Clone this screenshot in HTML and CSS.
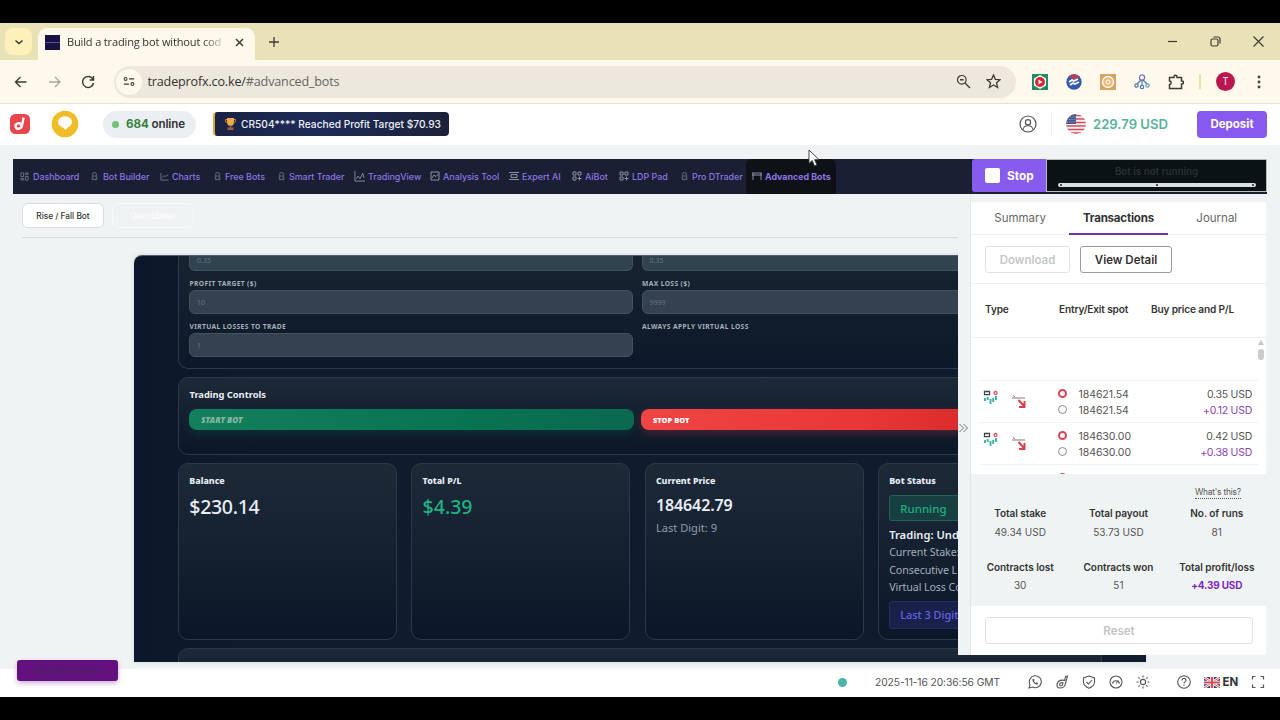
FILE: index.html
```html
<!DOCTYPE html>
<html lang="en">
<head>
<meta charset="utf-8">
<title>Build a trading bot without coding</title>
<link rel="stylesheet" href="styles.css">
</head>
<body>
<svg class="defs" width="0" height="0">
  <defs>
    <symbol id="grid" viewBox="0 0 10 10"><path d="M1 1h3v4H1zM6 1h3v2H6zM1 7h3v2H1zM6 5h3v4H6z"/></symbol>
    <symbol id="bot" viewBox="0 0 10 10"><path d="M2 4.500h6M3 4V2.500a2 2 0 0 1 4 0V4M2.500 5v3.500h5V5M4.200 6.500v.5M6 6.500v.5"/></symbol>
    <symbol id="chart" viewBox="0 0 10 10"><path d="M1 1v8h8.500M2.500 6l2-2 1.500 1 3-2"/></symbol>
    <symbol id="tv" viewBox="0 0 12 12"><path d="M1 0v11h11M2.500 8.500l2-3 2 3 3-6 1.500 5"/></symbol>
    <symbol id="analysis" viewBox="0 0 10 10"><path d="M1 1h8v8H1zM2 7l2-3 2 1.500L8.500 3"/></symbol>
    <symbol id="expert" viewBox="0 0 10 10"><path d="M0 1.500h10M2 3.500h6v3H2zM0 8.500h10"/></symbol>
    <symbol id="blocks" viewBox="0 0 10 10"><path d="M1 1h3v3H1zM6 1h3v3H6zM1 6h3v3H1zM7.500 5.500v4M5.500 7.500h4"/></symbol>
    <symbol id="adv" viewBox="0 0 10 10"><path d="M0 2h10M0 4h10M1 2v7M9 2v7"/></symbol>
    <symbol id="market" viewBox="0 0 16 16"><g fill="none" stroke-width="1.300"><path stroke="#444" d="M1.500 1.500h5v3.200h-5z"/><circle cx="12.500" cy="3" r="1.500" stroke="#e0525c"/></g><path d="M2 8v3M4.700 7v3M7.500 9v5M10.200 8v4M13 6v4" stroke="#38b0a4" stroke-width="1.900"/></symbol>
    <symbol id="fall" viewBox="0 0 16 16"><path d="M1 5h13" stroke="#999" stroke-width="1.300"/><path d="M2 2.500l2 1.500" stroke="#d84c55"/><path d="M7.500 7l5.500 6M13.500 8v6H8" fill="none" stroke="#d93e49" stroke-width="2"/></symbol>
    <symbol id="flaguk" viewBox="0 0 16 11"><path fill="#31436f" d="M0 0h16v11H0z"/><path d="M0 0l16 11M16 0L0 11" stroke="#fff" stroke-width="2.600"/><path d="M0 0l16 11M16 0L0 11" stroke="#d64853"/><path d="M8 0v11M0 5.500h16" stroke="#fff" stroke-width="3.600"/><path d="M8 0v11M0 5.500h16" stroke="#d64853" stroke-width="2"/></symbol>
  </defs>
</svg>
<div class="screen">
  <div class="tabstrip">
    <div class="tabmenu"><svg class="ic" width="10" height="10" viewBox="0 0 10 10"><path d="M1.500 3.500l3.500 3 3.500-3" stroke-width="1.600"/></svg></div>
    <div class="tab"><span class="favicon"></span><span class="tabtitle">Build a trading bot without cod</span><svg class="ic" width="9" height="9" viewBox="0 0 9 9"><path d="M1 1l7 7M8 1L1 8" stroke-width="1.500"/></svg></div>
    <svg class="ic plus" width="12" height="12" viewBox="0 0 12 12"><path d="M6 1v10M1 6h10" stroke-width="1.300"/></svg>
    <div class="winbtns">
      <svg class="ic" width="11" height="11" viewBox="0 0 11 11"><path d="M1 5.500h9"/></svg>
      <svg class="ic" width="11" height="11" viewBox="0 0 11 11"><rect x="1" y="3" width="7" height="7" rx="1.500"/><path d="M3.500 1h4.500a2 2 0 0 1 2 2v4.500"/></svg>
      <svg class="ic" width="11" height="11" viewBox="0 0 11 11"><path d="M.5.5l10 10M10.500.5L.5 10.500"/></svg>
    </div>
  </div>
  <div class="toolbar">
    <svg class="ic" width="14" height="14" viewBox="0 0 14 14"><path d="M12.500 7H2M6.500 2l-5 5 5 5" stroke-width="1.400"/></svg>
    <svg class="ic dim" width="14" height="14" viewBox="0 0 14 14"><path d="M1 7h11M7 2l5 5-5 5" stroke-width="1.300"/></svg>
    <svg class="ic" width="14" height="14" viewBox="0 0 14 14"><path d="M12 4.500A5.500 5.500 0 1 0 12.500 8M12.500 1v4h-4" stroke-width="1.500"/></svg>
    <div class="urlbar">
      <span class="site"><svg class="ic" width="12" height="11" viewBox="0 0 14 12"><circle cx="3" cy="3" r="1.700"/><path d="M7 3h6M1 9h6" stroke-width="1.500"/><circle cx="11" cy="9" r="1.700"/></svg></span>
      <span class="url">tradeprofx.co.ke/<i>#advanced_bots</i></span>
      <svg class="ic" width="15" height="15" viewBox="0 0 15 15"><circle cx="5.800" cy="5.800" r="4.300"/><path d="M9 9l5 5M4 5.800h3.600" stroke-width="1.400"/></svg>
      <svg class="ic" width="15" height="15" viewBox="0 0 15 15"><path d="M7.500 1l1.900 4.300 4.600.4-3.500 3.100 1.100 4.700-4.100-2.500-4.100 2.500 1.100-4.700L1 5.700l4.600-.4z" stroke-width="1.300"/></svg>
    </div>
    <div class="exts">
      <svg width="16" height="16" viewBox="0 0 16 16"><path fill="#218c68" d="M0 0h16v16H0z"/><path fill="#fff" d="M8 1l6 3.500v7L8 15l-6-3.500v-7z"/><circle cx="8" cy="8" r="5" fill="#d92632"/><path fill="#fff" d="M6.500 5.500L10.500 8l-4 2.500z"/></svg>
      <svg width="16" height="16" viewBox="0 0 16 16"><circle cx="8" cy="8" r="7.700" fill="#3159ad"/><path d="M3 2a7.700 7.700 0 0 1 11 1L8 7z" fill="#a9445f"/><path d="M3 8l3-2 2 1 4-2M4 11l3-2 2 1 4-2" stroke="#fff" stroke-width="1.800" fill="none"/></svg>
      <svg width="16" height="16" viewBox="0 0 16 16"><path fill="#d7a461" d="M0 0h16v16H0z"/><circle cx="8" cy="8" r="5.500" fill="#e9bd79" stroke="#fff" stroke-width="1.300"/><circle cx="8" cy="8" r="2" fill="none" stroke="#fff"/></svg>
      <svg width="16" height="16" viewBox="0 0 16 16" fill="none" stroke="#5478b4" stroke-width="1.200"><circle cx="8" cy="3.500" r="2.600" stroke="#7773cd"/><path d="M8 6v5M7 6l-4 4M9 6l4 4"/><circle cx="2.500" cy="11.500" r="1.700"/><circle cx="8" cy="13" r="1.700"/><circle cx="13.500" cy="11.500" r="1.700" stroke="#50afb8"/></svg>
      <svg class="ic" width="16" height="16" viewBox="0 0 16 16"><path d="M1.500 3.500H6V2.800a1.500 1.500 0 0 1 3 0v.7h4.500V7h.5a1.400 1.400 0 0 1 0 3h-.5v4.500h-12v-4a1.700 1.700 0 0 0 0-3.400z" stroke-width="1.500"/></svg>
    </div>
    <span class="extsep"></span><span class="avatar">T</span>
    <svg class="more" width="4" height="14" viewBox="0 0 4 14" fill="#444"><circle cx="2" cy="2" r="1.400"/><circle cx="2" cy="7" r="1.400"/><circle cx="2" cy="12" r="1.400"/></svg>
  </div>

  <header class="appbar">
    <svg class="logo" width="20" height="20" viewBox="0 0 20 20"><rect width="20" height="20" rx="5.500" fill="#e8454e"/><g fill="none" stroke="#fff" stroke-width="2.300"><ellipse cx="8.500" cy="12" rx="3" ry="2.700" transform="rotate(-15 8.500 12)"/><path d="M13.700 3.500l-2 9.500"/></g></svg>
    <span class="chat"><svg width="28" height="28" viewBox="0 0 28 28"><circle cx="14" cy="14" r="13.300" fill="#efbd29"/><ellipse cx="14" cy="12" rx="7" ry="5.800" fill="#fff"/><path d="M11 16h7l-3.500 4z" fill="#fff"/></svg></span>
    <span class="online"><i></i><b>684</b> online</span>
    <span class="ticker"><svg width="11" height="12" viewBox="0 0 11 12"><path d="M2 0h7v4c0 3-2 4-3.500 4S2 7 2 4z" fill="#e8ac48"/><path d="M2 1.500H.5C.5 4 1 5 2.500 5M9 1.500h1.500C10.500 4 10 5 8.500 5" fill="none" stroke="#c78439"/><path d="M4.800 7h1.400v3H4.800z" fill="#bd6936"/><path d="M2.500 9.500h6V12h-6z" fill="#9f5949"/></svg>CR504**** Reached Profit Target $70.93</span>
    <span class="grow"></span>
    <svg class="user" width="18" height="18" viewBox="0 0 18 18"><circle cx="9" cy="9" r="8"/><circle cx="9" cy="7.300" r="2.600"/><path d="M4 14.500c1-5 9-5 10 0"/></svg>
    <span class="vsep"></span>
    <svg class="usflag" width="20" height="20" viewBox="0 0 20 20"><clipPath id="round"><circle cx="10" cy="10" r="10"/></clipPath><g clip-path="url(#round)"><path fill="#f3eef0" d="M0 0h20v20H0z"/><path d="M0 1.500h20M0 5h20M0 8.500h20M0 12h20M0 15.500h20M0 19h20" stroke="#cf515c" stroke-width="1.700"/><path fill="#4c5990" d="M0 0h10v10H0z"/><path d="M2 3h8M1 5.500h9M1 8h9" stroke="#aeb6d3" stroke-width=".8" stroke-dasharray="1 1.200"/></g></svg>
    <span class="balance">229.79 USD</span>
    <button class="deposit">Deposit</button>
  </header>

  <main class="work">
    <nav class="nav">
      <div class="menu">
        <a><svg class="ni"><use href="#grid"/></svg>Dashboard</a>
        <a><svg class="ni"><use href="#bot"/></svg>Bot Builder</a>
        <a><svg class="ni"><use href="#chart"/></svg>Charts</a>
        <a><svg class="ni"><use href="#bot"/></svg>Free Bots</a>
        <a><svg class="ni"><use href="#bot"/></svg>Smart Trader</a>
        <a><svg class="ni big"><use href="#tv"/></svg>TradingView</a>
        <a><svg class="ni lit"><use href="#analysis"/></svg>Analysis Tool</a>
        <a><svg class="ni lit"><use href="#expert"/></svg>Expert AI</a>
        <a><svg class="ni lit"><use href="#blocks"/></svg>AiBot</a>
        <a><svg class="ni lit"><use href="#blocks"/></svg>LDP Pad</a>
        <a><svg class="ni"><use href="#bot"/></svg>Pro DTrader</a>
        <a class="active"><svg class="ni lit"><use href="#adv"/></svg>Advanced Bots</a>
      </div>
      <button class="stop"><i></i>Stop</button>
      <div class="status"><span>Bot is not running</span><div class="progress"><i></i><i></i><i></i></div></div>
    </nav>
    <div class="subtabs"><span class="sub">Rise / Fall Bot</span><span class="sub ghost">Over/Under</span></div>

    <section class="board">
      <div class="panel settings">
        <div class="field cut"><div class="input">0.35</div></div>
        <div class="field cut"><div class="input">0.35</div></div>
        <div class="field"><label>PROFIT TARGET ($)</label><div class="input">10</div></div>
        <div class="field"><label>MAX LOSS ($)</label><div class="input">9999</div></div>
        <div class="field"><label>VIRTUAL LOSSES TO TRADE</label><div class="input">1</div></div>
        <div class="field"><label>ALWAYS APPLY VIRTUAL LOSS</label></div>
      </div>
      <div class="panel controls">
        <h3>Trading Controls</h3>
        <div class="btnrow"><button class="start">START BOT</button><button class="halt">STOP BOT</button></div>
      </div>
      <div class="cards">
        <div class="panel card"><h4>Balance</h4><p class="value">$230.14</p></div>
        <div class="panel card"><h4>Total P/L</h4><p class="value gain">$4.39</p></div>
        <div class="panel card"><h4>Current Price</h4><p class="value price">184642.79</p><p class="digit">Last Digit: 9</p></div>
        <div class="panel card"><h4>Bot Status</h4><div class="tag run">Running</div><p class="trade">Trading: Und</p><p class="line">Current Stake:</p><p class="line">Consecutive L</p><p class="line">Virtual Loss Co</p><div class="tag digits">Last 3 Digits</div></div>
      </div>
      <div class="panel next"></div>
    </section>

    <aside class="drawer">
      <div class="handle"><svg width="9" height="10" viewBox="0 0 9 10"><path d="M.5 1l4 4-4 4M4.500 1l4 4-4 4"/></svg></div>
      <div class="sheet">
        <div class="dtabs"><span>Summary</span><span class="on">Transactions</span><span>Journal</span></div>
        <div class="actions"><button class="off">Download</button><button>View Detail</button></div>
        <div class="thead"><span>Type</span><span>Entry/Exit spot</span><span>Buy price and P/L</span></div>
        <div class="list">
          <div class="scroll"><i></i><b></b></div>
          <div class="blank"></div>
          <div class="row"><svg class="ti"><use href="#market"/></svg><svg class="ti low"><use href="#fall"/></svg><div class="spots"><span><i class="entry"></i>184621.54</span><span><i></i>184621.54</span></div><div class="money"><span>0.35 USD</span><span class="plus-pl">+0.12 USD</span></div></div>
          <div class="row"><svg class="ti"><use href="#market"/></svg><svg class="ti low"><use href="#fall"/></svg><div class="spots"><span><i class="entry"></i>184630.00</span><span><i></i>184630.00</span></div><div class="money"><span>0.42 USD</span><span class="plus-pl">+0.38 USD</span></div></div>
          <div class="row"><span></span><span></span><div class="spots"><span><i class="entry"></i></span></div></div>
        </div>
        <div class="stats">
          <div class="what"><span>What's this?</span></div>
          <div><b>Total stake</b><span>49.34 USD</span></div>
          <div><b>Total payout</b><span>53.73 USD</span></div>
          <div><b>No. of runs</b><span>81</span></div>
          <div><b>Contracts lost</b><span>30</span></div>
          <div><b>Contracts won</b><span>51</span></div>
          <div><b>Total profit/loss</b><span class="profit">+4.39 USD</span></div>
        </div>
        <div class="resetbox"><button>Reset</button></div>
      </div>
    </aside>
  </main>

  <footer class="foot">
    <i class="live"></i><span class="time">2025-11-16 20:36:56 GMT</span>
    <div class="fi">
      <svg viewBox="0 0 14 14"><path d="M1 13l1-3.500A6 6 0 1 1 4.500 12z"/><path d="M4.500 4c-.5 3 2.500 6 5 5.500l.5-1.500-1.500-.7-.8.700C6.500 7.500 6 6.700 6 6l.6-.700L6 4z" fill="#555" stroke="none"/></svg>
      <svg viewBox="0 0 14 14"><path d="M12.500 1l-2 .4-.8 4C6 4.500 3 6 2 9c-.6 3 1 4 3 4 3 0 4.800-1.500 5.300-4z M8 7.800C6 7.300 4.800 8.300 4.600 9.600c-.1 1.700 2.700 1.400 3-.3z"/></svg>
      <svg viewBox="0 0 14 14"><path d="M7 1l5.500 2v4c0 3-2.500 5-5.500 6.300C4 12 1.500 10 1.500 7V3zM4.500 7l2 2 3.500-4"/></svg>
      <svg viewBox="0 0 14 14"><circle cx="7" cy="7" r="6"/><path d="M3.500 8.500a3.600 3.600 0 0 1 7 0M7 8.500l2.500-3"/></svg>
      <svg viewBox="0 0 14 14"><circle cx="7" cy="7" r="2.600"/><path d="M7 .5v2M7 11.500v2M.5 7h2M11.500 7h2M2.400 2.400l1.300 1.300M10.300 10.300l1.300 1.300M11.600 2.400l-1.300 1.300M3.700 10.300l-1.300 1.300"/></svg>
    </div>
    <svg class="help" viewBox="0 0 14 14"><circle cx="7" cy="7" r="6.300"/><path d="M5 5.500c0-3 4-2.500 4-.3C9 7 7 6.800 7 8.500M7 9.700v1.200"/></svg>
    <svg class="uk" width="16" height="11"><use href="#flaguk"/></svg><b class="lang">EN</b>
    <svg class="full" viewBox="0 0 14 14"><path d="M1.500 4.500v-3h3M9.500 1.500h3v3M12.500 9.500v3h-3M4.500 12.500h-3v-3"/></svg>
  </footer>
  <div class="risk">Risk Disclaimer</div>
  <svg class="cursor" width="12" height="18" viewBox="0 0 12 18"><path d="M1 1v13.500l3.200-3 2.300 5.500 2.400-1-2.300-5.300H11z" fill="#fff" stroke="#333" stroke-width=".9"/></svg>
</div>
</body>
</html>
```
FILE: styles.css
```css
* { box-sizing: border-box; }
body { margin: 0; background: #000; font-family: Inter, sans-serif; color: #333; }
button { font: inherit; border: 0; margin: 0; padding: 0; }
p, h3, h4 { margin: 0; }
i { font-style: normal; }
.defs { position: absolute; }
.screen { position: relative; width: 1280px; height: 720px; padding: 23px 0; overflow: hidden; background: #000; display: flex; flex-direction: column; }
.ic { fill: none; stroke: #3c3b36; stroke-width: 1.2; flex: none; }
.dim { stroke: #aaa79d; }
.grow { flex: 1; }

.tabstrip { height: 37px; flex: none; background: #eae2b7; display: flex; align-items: flex-start; }
.tabmenu { width: 27px; height: 27px; margin: 5px 0 0 5px; border-radius: 8px; background: #fdf0bb; display: grid; place-items: center; }
.tab { width: 217px; height: 32px; margin: 5px 0 0 6px; padding: 0 11px 4px 7px; border-radius: 9px 9px 0 0; background: #fef9ea; display: flex; align-items: center; }
.favicon { width: 15px; height: 15px; background: linear-gradient(#1a1244 45%, #59597f 46% 54%, #1a1244 55%); flex: none; }
.tabtitle { width: 161px; margin: 0 8px 0 7px; white-space: nowrap; font: 11.1px/16px "Open Sans", sans-serif; letter-spacing: -.18px; mask-image: linear-gradient(90deg, #000 85%, transparent); }
.plus { margin: 13px 0 0 13px; }
.winbtns { margin: 13px 16px 0 auto; display: flex; gap: 32px; }

.toolbar { height: 44px; flex: none; background: #fef9ea; border-bottom: 1px solid #e6e2d8; display: flex; align-items: center; padding: 0 0 0 14px; gap: 19.500px; }
.urlbar { width: 902px; height: 32px; flex: none; margin-left: -1px; border-radius: 16px; background: #ece8de; display: flex; align-items: center; padding: 0 15px 0 2px; gap: 15px; }
.site { width: 26px; height: 26px; border-radius: 50%; background: #fef9ea; display: grid; place-items: center; }
.url { flex: 1; margin-left: -9px; font: 12.6px/18px "Open Sans", sans-serif; letter-spacing: -.17px; color: #35332f; }
.url i { color: #68655f; }
.exts { display: flex; gap: 18px; margin-left: -3px; }
.extsep { width: 2px; height: 15px; background: #f8df91; margin-left: -5px; }
.avatar { width: 19px; height: 19px; margin-left: -4px; border-radius: 50%; background: #b9174f; color: #eee; font: 10px/19px Roboto, sans-serif; text-align: center; }
.more { margin-left: 2px; }

.appbar { height: 41px; flex: none; background: #fff; display: flex; align-items: center; padding: 0 13px 1px 10px; }
.chat { margin-left: 21px; height: 28px; }
.online { margin-left: 24px; width: 93px; height: 27px; border-radius: 14px; background: #e9eff2; display: flex; align-items: center; padding-left: 9px; font-size: 11.600px; font-weight: 600; white-space: pre; letter-spacing: -.1px; }
.online i { width: 7px; height: 7px; border-radius: 50%; background: #73c173; margin-right: 7px; }
.online b { color: #38803d; font-weight: 700; }
.ticker { margin-left: 17px; width: 236px; height: 24px; border-radius: 4px; border-left: 2px solid #d4ad37; background: linear-gradient(90deg, #1a2344, #1e2b57 45%, #1b2138); color: #eef0f7; display: flex; align-items: center; gap: 5px; padding-left: 10px; font-size: 10.200px; font-weight: 500; white-space: nowrap; }
.user { fill: none; stroke: #555; stroke-width: 1.2; }
.vsep { width: 1px; height: 24px; background: #eee; margin: 0 14px 0 14px; }
.balance { margin: 0 0 0 7px; width: 104px; font-size: 13.100px; font-weight: 600; color: #57b29e; white-space: nowrap; }
.deposit { width: 70px; height: 27px; border-radius: 4px; background: #8759ee; color: #fff; font-size: 11.500px; font-weight: 700; }

.work { position: relative; height: 524px; flex: none; background: #f0f3f4; padding: 14px 13px 0; }
.nav { height: 35px; background: #1a1f34; display: flex; }
.menu { width: 959px; display: grid; grid-template-columns: 70px 70px 53px 64px 77px 76px 79px 63px 47px 61px 66px 90px; padding-left: 7px; flex: none; }
.menu a { display: flex; align-items: center; gap: 3px; padding-bottom: 1px; color: #8f75e3; font-size: 8.900px; font-weight: 500; white-space: nowrap; }
.menu a:nth-child(-n+2) { gap: 4px; }
.menu a.active { background: #0e1217; font-weight: 700; padding-left: 6px; border-radius: 6px 6px 0 0; }
.ni { width: 9px; height: 9px; fill: none; stroke: #777b98; stroke-width: .9; flex: none; }
.ni.big { width: 11px; height: 11px; stroke: #9999b5; }
.ni.lit { width: 10px; height: 10px; stroke: #9c9bb5; }
.stop { width: 74px; height: 33px; border-radius: 3px 0 0 3px; background: #865bee; color: #fff; font-size: 11.800px; font-weight: 700; display: flex; align-items: center; padding-left: 13px; gap: 7px; }
.stop i { width: 15px; height: 15px; border-radius: 2px; background: #fff; }
.status { flex: 1; height: 33px; border: 1px solid #b8bec2; background: #0b1214; display: flex; flex-direction: column; align-items: center; padding-top: 5px; font-size: 9.800px; font-weight: 600; line-height: 14px; color: #293033; }
.progress { width: 198px; height: 4px; margin-top: 4px; border-radius: 2px; background: #dddfe6; display: flex; justify-content: space-between; align-items: center; padding: 0 2px; }
.progress i { width: 2px; height: 2px; background: #222; border-radius: 50%; }
.subtabs { height: 44px; margin: 0 0 0 9px; width: 936px; border-bottom: 1px solid #d7dbdd; display: flex; gap: 8px; padding-top: 9px; }
.sub { width: 82px; height: 25px; border: 1px solid #d9dddf; border-radius: 6px; background: #fff; font-size: 8.300px; font-weight: 500; line-height: 24px; text-align: center; }
.ghost { border-color: #f7f9fa; background: none; color: #fbfdfd; }

.board { width: 1012px; height: 407px; margin: 17px 0 0 121px; padding: 0 44px; overflow: hidden; border-radius: 8px 8px 0 0; border-top: 1px solid #536069; background: linear-gradient(90deg, #0b172a, #101c2d 12%, #101c2d); font-family: "Noto Sans", sans-serif; color: #e8eef5; box-shadow: 0 0 5px #cfd6da; }
.panel { border: 1px solid #2b3948; border-radius: 10px; background: linear-gradient(#1e2938, #0b1728); }
.settings { width: 924px; height: 113px; border-top: 0; border-radius: 0 0 10px 10px; background: linear-gradient(#17232f, #0d192a); padding: 0 10px; display: grid; grid-template-columns: 444px 445px; grid-template-rows: 22px 43px 43px; column-gap: 8.500px; align-items: start; }
.field label { display: block; height: 12px; padding-left: .5px; font-size: 6.700px; line-height: 12px; font-weight: 700; letter-spacing: .38px; color: #a4afbb; }
.input { height: 24px; border: 1px solid #435261; border-radius: 6px; background: #334151; color: #66727f; font-size: 7px; line-height: 23px; padding-left: 7px; }
.cut .input { height: 15px; border-top: 0; border-radius: 0 0 6px 6px; line-height: 9px; background: #30434e; }
.controls { width: 924px; height: 78px; margin-top: 8px; padding: 9px 10px; }
.controls h3 { font-size: 9.400px; line-height: 16px; font-weight: 700; padding-left: .5px; letter-spacing: -.05px; }
.btnrow { display: flex; gap: 7px; margin-top: 6px; }
.btnrow button { width: 445px; height: 21px; border-radius: 8px; text-align: left; padding-left: 12px; font-size: 7.500px; font-weight: 900; }
.btnrow .start { background: linear-gradient(90deg, #13805d, #087451 60%, #0b6950); color: #86b6a3; box-shadow: 0 3px 8px #075c4455; font-style: italic; font-size: 8.200px; }
.halt { background: linear-gradient(90deg, #ef4545, #e93636 50%, #c82121); color: #fff; box-shadow: 0 3px 8px #a42c3966; }
.cards { display: grid; grid-template-columns: repeat(4, 219px); gap: 14.300px; margin-top: 8px; }
.card { height: 177px; padding: 10px 10px 0 10.300px; overflow: hidden; white-space: nowrap; }
.card h4 { font-size: 8.900px; line-height: 13px; font-weight: 800; }
.value { font-size: 19.500px; line-height: 26px; margin-top: 7px; font-weight: 500; letter-spacing: -.3px; }
.gain { color: #20b383; letter-spacing: 0; }
.price { font-size: 16px; margin-top: 5px; font-weight: 600; letter-spacing: -.1px; }
.digit { font-size: 11.100px; line-height: 16px; margin-top: 2px; color: #919dab; }
.tag { border: 1px solid #226052; border-radius: 3px; width: 190px; height: 26px; line-height: 25px; padding-left: 10px; font-size: 11.500px; margin-top: 8px; }
.run { background: #173f42; color: #1faf7e; font-weight: 500; }
.trade { margin-top: 6px; font-size: 11.200px; line-height: 15px; font-weight: 600; }
.line { font-size: 10.700px; line-height: 17.500px; color: #a2adba; letter-spacing: -.1px; }
.trade + .line { margin-top: 2px; }
.digits { margin-top: 4px; height: 28px; background: #19204a; border-color: #292d5d; color: #6663e5; font-size: 10.900px; font-weight: 500; }
.next { width: 924px; height: 50px; margin-top: 8px; }

.drawer { position: absolute; left: 958px; top: 49px; width: 308px; height: 461px; background: #f0f3f4; display: flex; }
.handle { width: 13px; display: flex; align-items: center; padding: 7px 0 0 1px; border-right: 1px solid #e4e8e9; }
.handle svg { fill: none; stroke: #777; }
.sheet { width: 295px; margin-top: 8px; background: #fff; display: flex; flex-direction: column; }
.dtabs { height: 33px; border-bottom: 1px solid #eceff0; display: grid; grid-template-columns: repeat(3, 98.300px); text-align: center; font-size: 11.500px; line-height: 33px; color: #666; }
.dtabs .on { font-weight: 700; color: #333; border-bottom: 2px solid #71349e; height: 33px; letter-spacing: -.2px; }
.actions { height: 49px; border-bottom: 1px solid #eef0f0; display: flex; gap: 10px; padding: 11px 14px; }
.actions button, .resetbox button { height: 27px; border: 1px solid #9b9b9b; border-radius: 3px; background: #fff; font-size: 11.500px; font-weight: 600; width: 92px; color: #333; }
.actions .off { width: 85px; border-color: #e1e4e5; color: #c4c7c8; }
.thead { height: 54px; border-bottom: 1px solid #eef0f0; display: grid; grid-template-columns: 74px 92px auto; padding: 0 0 3px 14px; align-items: center; font-size: 10.100px; font-weight: 600; letter-spacing: -.15px; white-space: nowrap; }
.list { position: relative; height: 136px; overflow: hidden; }
.blank { height: 43px; margin: 0 8px; border-bottom: 1px solid #f0f2f2; }
.scroll { position: absolute; right: 2px; top: 2px; display: flex; flex-direction: column; align-items: center; gap: 4px; }
.scroll i { border: 3px solid transparent; border-top: 0; border-bottom: 5px solid #c4c6c8; }
.scroll b { width: 6px; height: 11px; border-radius: 3px; background: #c9cccd; }
.row { height: 42px; margin: 0 8px; border-bottom: 1px solid #f0f2f2; display: grid; grid-template-columns: 28px 48px 79px 1fr; padding: 6px 6px 0 4px; }
.ti { width: 16px; height: 16px; margin-top: 3px; }
.low { margin-top: 6px; }
.spots, .money { display: flex; flex-direction: column; font-size: 10.500px; line-height: 16px; color: #555; letter-spacing: -.05px; white-space: nowrap; }
.money { letter-spacing: -.25px; text-align: right; }
.spots span { display: flex; align-items: center; height: 16px; }
.spots i { width: 9px; height: 9px; margin: -3px 11.500px 0 -1px; border: 1px solid #888; border-radius: 50%; flex: none; }
.spots .entry { border: 2px solid #da4353; }
.plus-pl { color: #8846ab; }
.stats { height: 132px; background: #f0f3f4; display: grid; grid-template-columns: repeat(3, 98.300px); grid-template-rows: 28px 53.500px 45px; text-align: center; font-size: 10px; white-space: nowrap; }
.stats div { display: flex; flex-direction: column; line-height: 18.500px; padding-top: 2px; color: #555; }
.stats b { color: #333; font-weight: 600; letter-spacing: -.05px; }
.stats .what { grid-column: 1 / 4; align-items: flex-end; padding: 12px 25px 0 0; font-size: 8.400px; line-height: 12px; letter-spacing: -.2px; }
.what span { border-bottom: 1px dotted #555; height: 13px; }
.stats .profit { color: #7b29bb; font-weight: 700; letter-spacing: -.2px; }
.resetbox { flex: 1; padding: 11px 14px; }
.resetbox button { width: 268px; border-color: #e0e3e5; color: #c1c5c7; }

.foot { height: 28px; flex: none; background: #fff; display: flex; align-items: center; padding: 0 0 2px 838px; }
.live { width: 9px; height: 9px; border-radius: 50%; background: #4bb2a6; }
.time { width: 125px; margin-left: 28px; font-size: 10.300px; white-space: nowrap; color: #555; letter-spacing: -.1px; }
.fi { display: flex; gap: 13px; margin-left: 27.500px; }
.fi svg, .help, .full { width: 14px; height: 14px; fill: none; stroke: #555; stroke-width: 1.1; }
.help { margin-left: 27px; }
.uk { margin-left: 13px; }
.lang { font-size: 11.500px; font-weight: 700; margin-left: 3px; }
.full { margin-left: 13px; stroke-width: 1.2; }
.risk { position: absolute; left: 17px; top: 660px; width: 101px; height: 21px; border-radius: 3px; background: #63117e; color: #4c2162; font-size: 9px; font-weight: 600; line-height: 21px; text-align: center; box-shadow: 0 2px 5px #cca9d5; }
.cursor { position: absolute; left: 808px; top: 149px; }
```
